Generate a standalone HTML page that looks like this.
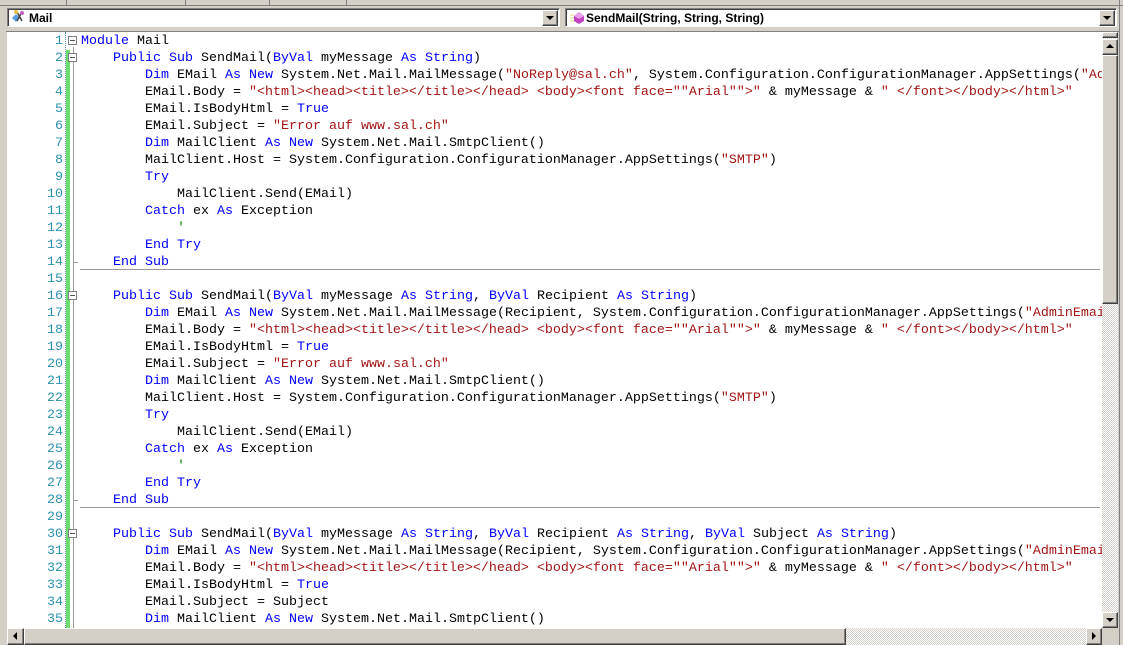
<!DOCTYPE html>
<html><head><style>
body{margin:0;width:1123px;height:645px;background:#d4d0c8;position:relative;overflow:hidden;font-family:"Liberation Sans",sans-serif}
.abs{position:absolute}
.combo{position:absolute;top:8px;height:19px;background:#fff;border:1px solid #808080;border-right-color:#fff;border-bottom-color:#fff;box-shadow:inset 1px 1px 0 #404040;font-size:12px;font-weight:bold;line-height:19px;box-sizing:border-box}
.btn{position:absolute;background:#d4d0c8;border:1px solid;border-color:#fff #404040 #404040 #fff;box-sizing:border-box;box-shadow:inset -1px -1px 0 #808080}
.hatch{background-color:#e8e6e0;background-image:repeating-conic-gradient(#d4d0c8 0 25%,#fff 0 50%);background-size:2px 2px}
#ed{position:absolute;left:7px;top:32px;width:1095px;height:596px;background:#fff;overflow:hidden}
.ln{position:absolute;left:0;width:56px;text-align:right;color:#2b91af;font:13.33px "Liberation Mono",monospace;line-height:17px}
.code{position:absolute;left:74px;top:1px;font:13.33px "Liberation Mono",monospace;line-height:17px;white-space:pre;color:#000}
.k{color:#0000ff}.s{color:#a31515}
.tri{width:0;height:0;position:absolute}
</style></head><body>
<div class="abs" style="left:0;top:0;width:1123px;height:5px;background:#d4d0c8;border-bottom:1px solid #808080"></div>
<div class="abs" style="left:66px;top:0;width:1px;height:5px;background:#808080"></div>
<div class="abs" style="left:185px;top:0;width:1px;height:5px;background:#808080"></div>
<div class="abs" style="left:269px;top:0;width:1px;height:5px;background:#808080"></div>
<div class="abs" style="left:346px;top:0;width:1px;height:5px;background:#808080"></div>

<div class="combo" style="left:7px;width:553px;padding-left:21px">Mail</div>
<svg class="abs" style="left:10px;top:9px" width="16" height="16"><path d="M2 9l4-4 4 4-4 4z" fill="#5aa0e0"/><path d="M7 3l5 9M12 3l-5 9" stroke="#444" stroke-width="1.5"/><circle cx="6" cy="3" r="2" fill="#e8c040"/><circle cx="12" cy="4" r="2" fill="#c060c0"/></svg>
<div class="btn" style="left:542px;top:10px;width:16px;height:16px"></div>
<div class="tri" style="left:546px;top:16px;border:4px solid transparent;border-top:4px solid #000;border-bottom:0"></div>

<div class="combo" style="left:565px;width:552px;padding-left:20px">SendMail(String, String, String)</div>
<svg class="abs" style="left:569px;top:11px" width="16" height="14"><path d="M1 4h4M1 7h4M1 10h4" stroke="#d8d880"/><path d="M10 1l5 4v5l-5 3-5-3V5z" fill="#c040c0"/><path d="M10 1l5 4-5 3-5-3z" fill="#e8a0e8"/></svg>
<div class="btn" style="left:1099px;top:10px;width:16px;height:16px"></div>
<div class="tri" style="left:1103px;top:16px;border:4px solid transparent;border-top:4px solid #000;border-bottom:0"></div>

<div class="abs" style="left:6px;top:31px;width:1113px;height:1px;background:#808080"></div>
<div id="ed">
<div class="abs" style="left:58px;top:0;width:1px;height:596px;border-left:1px dotted #4a8ab0"></div>
<div class="abs" style="left:59px;top:18px;width:4px;height:578px;background:#6cdc6c"></div>
<div class="abs" style="left:73px;top:237px;width:1020px;height:1px;background:#999"></div>
<div class="abs" style="left:73px;top:475px;width:1020px;height:1px;background:#999"></div>
<div class="abs" style="left:66px;top:15px;width:1px;height:581px;background:#999"></div>
<div class="ln" style="top:1px">1<br>2<br>3<br>4<br>5<br>6<br>7<br>8<br>9<br>10<br>11<br>12<br>13<br>14<br>15<br>16<br>17<br>18<br>19<br>20<br>21<br>22<br>23<br>24<br>25<br>26<br>27<br>28<br>29<br>30<br>31<br>32<br>33<br>34<br>35</div>
<div class="abs" style="left:61px;top:4px;width:9px;height:9px;background:#fff;border:1px solid #808080;box-sizing:border-box"><div class="abs" style="left:1px;top:3px;width:5px;height:1px;background:#555"></div></div>
<div class="abs" style="left:61px;top:21px;width:9px;height:9px;background:#fff;border:1px solid #808080;box-sizing:border-box"><div class="abs" style="left:1px;top:3px;width:5px;height:1px;background:#555"></div></div>
<div class="abs" style="left:61px;top:259px;width:9px;height:9px;background:#fff;border:1px solid #808080;box-sizing:border-box"><div class="abs" style="left:1px;top:3px;width:5px;height:1px;background:#555"></div></div>
<div class="abs" style="left:61px;top:497px;width:9px;height:9px;background:#fff;border:1px solid #808080;box-sizing:border-box"><div class="abs" style="left:1px;top:3px;width:5px;height:1px;background:#555"></div></div>
<div class="abs" style="left:66px;top:230px;width:5px;height:1px;background:#999"></div>
<div class="abs" style="left:66px;top:468px;width:5px;height:1px;background:#999"></div>
<div class="code"><span class="k">Module</span> Mail
    <span class="k">Public</span> <span class="k">Sub</span> SendMail(<span class="k">ByVal</span> myMessage <span class="k">As</span> <span class="k">String</span>)
        <span class="k">Dim</span> EMail <span class="k">As</span> <span class="k">New</span> System.Net.Mail.MailMessage(<span class="s">"NoReply@sal.ch"</span>, System.Configuration.ConfigurationManager.AppSettings(<span class="s">"AdminEmail"</span>))
        EMail.Body = <span class="s">"&lt;html&gt;&lt;head&gt;&lt;title&gt;&lt;/title&gt;&lt;/head&gt; &lt;body&gt;&lt;font face=""Arial""&gt;"</span> &amp; myMessage &amp; <span class="s">" &lt;/font&gt;&lt;/body&gt;&lt;/html&gt;"</span>
        EMail.IsBodyHtml = <span class="k">True</span>
        EMail.Subject = <span class="s">"Error auf www.sal.ch"</span>
        <span class="k">Dim</span> MailClient <span class="k">As</span> <span class="k">New</span> System.Net.Mail.SmtpClient()
        MailClient.Host = System.Configuration.ConfigurationManager.AppSettings(<span class="s">"SMTP"</span>)
        <span class="k">Try</span>
            MailClient.Send(EMail)
        <span class="k">Catch</span> ex <span class="k">As</span> Exception
            <span style="color:#008000">'</span>
        <span class="k">End</span> <span class="k">Try</span>
    <span class="k">End</span> <span class="k">Sub</span>

    <span class="k">Public</span> <span class="k">Sub</span> SendMail(<span class="k">ByVal</span> myMessage <span class="k">As</span> <span class="k">String</span>, <span class="k">ByVal</span> Recipient <span class="k">As</span> <span class="k">String</span>)
        <span class="k">Dim</span> EMail <span class="k">As</span> <span class="k">New</span> System.Net.Mail.MailMessage(Recipient, System.Configuration.ConfigurationManager.AppSettings(<span class="s">"AdminEmail"</span>))
        EMail.Body = <span class="s">"&lt;html&gt;&lt;head&gt;&lt;title&gt;&lt;/title&gt;&lt;/head&gt; &lt;body&gt;&lt;font face=""Arial""&gt;"</span> &amp; myMessage &amp; <span class="s">" &lt;/font&gt;&lt;/body&gt;&lt;/html&gt;"</span>
        EMail.IsBodyHtml = <span class="k">True</span>
        EMail.Subject = <span class="s">"Error auf www.sal.ch"</span>
        <span class="k">Dim</span> MailClient <span class="k">As</span> <span class="k">New</span> System.Net.Mail.SmtpClient()
        MailClient.Host = System.Configuration.ConfigurationManager.AppSettings(<span class="s">"SMTP"</span>)
        <span class="k">Try</span>
            MailClient.Send(EMail)
        <span class="k">Catch</span> ex <span class="k">As</span> Exception
            <span style="color:#008000">'</span>
        <span class="k">End</span> <span class="k">Try</span>
    <span class="k">End</span> <span class="k">Sub</span>

    <span class="k">Public</span> <span class="k">Sub</span> SendMail(<span class="k">ByVal</span> myMessage <span class="k">As</span> <span class="k">String</span>, <span class="k">ByVal</span> Recipient <span class="k">As</span> <span class="k">String</span>, <span class="k">ByVal</span> Subject <span class="k">As</span> <span class="k">String</span>)
        <span class="k">Dim</span> EMail <span class="k">As</span> <span class="k">New</span> System.Net.Mail.MailMessage(Recipient, System.Configuration.ConfigurationManager.AppSettings(<span class="s">"AdminEmail"</span>))
        EMail.Body = <span class="s">"&lt;html&gt;&lt;head&gt;&lt;title&gt;&lt;/title&gt;&lt;/head&gt; &lt;body&gt;&lt;font face=""Arial""&gt;"</span> &amp; myMessage &amp; <span class="s">" &lt;/font&gt;&lt;/body&gt;&lt;/html&gt;"</span>
        EMail.IsBodyHtml = <span class="k">True</span>
        EMail.Subject = Subject
        <span class="k">Dim</span> MailClient <span class="k">As</span> <span class="k">New</span> System.Net.Mail.SmtpClient()</div>
</div>

<div class="abs hatch" style="left:1102px;top:32px;width:16px;height:596px"></div>
<div class="btn" style="left:1102px;top:32px;width:16px;height:6px"></div>
<div class="btn" style="left:1102px;top:39px;width:16px;height:16px"></div>
<div class="tri" style="left:1106px;top:44px;border:4px solid transparent;border-bottom:4px solid #000;border-top:0"></div>
<div class="btn" style="left:1102px;top:55px;width:16px;height:249px"></div>
<div class="btn" style="left:1102px;top:612px;width:16px;height:16px"></div>
<div class="tri" style="left:1106px;top:618px;border:4px solid transparent;border-top:4px solid #000;border-bottom:0"></div>
<div class="abs" style="left:1119px;top:0;width:1px;height:645px;background:#808080"></div>
<div class="abs hatch" style="left:7px;top:628px;width:1095px;height:17px"></div>
<div class="btn" style="left:7px;top:628px;width:17px;height:17px"></div>
<div class="tri" style="left:13px;top:632px;border:4px solid transparent;border-right:4px solid #000;border-left:0"></div>
<div class="btn" style="left:24px;top:628px;width:822px;height:17px"></div>
<div class="btn" style="left:1086px;top:628px;width:16px;height:17px"></div>
<div class="tri" style="left:1092px;top:632px;border:4px solid transparent;border-left:4px solid #000;border-right:0"></div>
</body></html>
